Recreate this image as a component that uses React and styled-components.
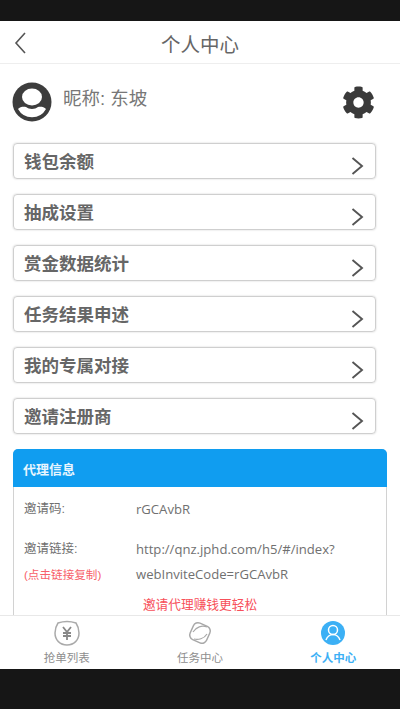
import React from "react";
import styled, { createGlobalStyle } from "styled-components";
import { FaCog } from "react-icons/fa";

const GlobalStyle = createGlobalStyle`
  html, body {
    margin: 0;
    padding: 0;
    background: #161616;
    font-family: "Liberation Sans", "Noto Sans CJK SC", sans-serif;
  }
  * { box-sizing: border-box; }
`;

const menuItems = [
  "钱包余额",
  "抽成设置",
  "赏金数据统计",
  "任务结果申述",
  "我的专属对接",
  "邀请注册商",
];

const Page = styled.div`
  width: 400px;
  height: 709px;
  display: flex;
  flex-direction: column;
  background: #161616;
  overflow: hidden;
`;

const BlackBar = styled.div`
  flex: 0 0 ${(p) => p.$h}px;
`;

const Screen = styled.div`
  flex: 1;
  min-height: 0;
  display: flex;
  flex-direction: column;
  background: #fff;
`;

const Header = styled.header`
  flex: 0 0 43px;
  display: flex;
  align-items: center;
  justify-content: center;
  position: relative;
  padding-top: 2px;
  border-bottom: 1px solid #eee;
  font-size: 19.5px;
  color: #666;
`;

const BackIcon = styled.svg`
  position: absolute;
  left: 14px;
  top: 10px;
`;

const Body = styled.div`
  flex: 1;
  min-height: 0;
  overflow: hidden;
`;

const Profile = styled.div`
  height: 79px;
  padding: 0 25px 3px 12px;
  display: flex;
  align-items: center;
`;

const Nick = styled.span`
  margin: -10px 0 0 11px;
  font-size: 18.5px;
  color: #777;
  flex: 1;
`;

const Gear = styled(FaCog)`
  width: 33px;
  height: 33px;
  color: #3a3a3a;
`;

const Menu = styled.div`
  display: flex;
  flex-direction: column;
  gap: 15px;
  padding: 0 24px 0 13px;
`;

const MenuRow = styled.div`
  height: 36px;
  display: flex;
  align-items: center;
  justify-content: space-between;
  padding: 0 11px 2px 10px;
  border: 1px solid #cfcfcf;
  border-radius: 4px;
  box-shadow: 0 0 2px #ccc;
  font-size: 17.5px;
  font-weight: 700;
  color: #666;
`;

const Chevron = styled.svg`
  margin-top: 11px;
`;

const Panel = styled.section`
  margin: 15px 13px 0;
  border: 1px solid #d2d2d2;
  border-radius: 5px 5px 0 0;
  height: 200px;
`;

const PanelTitle = styled.div`
  height: 38px;
  margin: -1px -1px 0;
  padding-left: 10px;
  display: flex;
  align-items: center;
  border-radius: 5px 5px 0 0;
  background: #109df0;
  color: #e8f5fe;
  font-size: 13px;
  font-weight: 700;
`;

const InfoRow = styled.div`
  display: grid;
  grid-template-columns: 112px 1fr;
  padding-left: 10px;
  margin-top: ${(p) => p.$top}px;
  font-size: 12.5px;
  line-height: 25px;
  color: #707070;
`;

const Value = styled.div`
  font-family: "Open Sans", "Noto Sans CJK SC", sans-serif;
  font-size: 13.1px;
`;

const Hint = styled.div`
  color: #f7606a;
  font-size: 11.6px;
`;

const Promo = styled.div`
  margin-top: 7px;
  text-align: center;
  font-size: 12.7px;
  color: #f7505a;
`;

const TabBar = styled.nav`
  flex: 0 0 54px;
  display: grid;
  grid-template-columns: repeat(3, 1fr);
  border-top: 1px solid #e8e8e8;
  background: #fff;
`;

const Tab = styled.div`
  display: flex;
  flex-direction: column;
  align-items: center;
  padding-top: 4px;
  gap: 3px;
  font-size: 11.5px;
  color: ${(p) => (p.$active ? "#3cb0f5" : "#8e8e8e")};
  font-weight: ${(p) => (p.$active ? 700 : 400)};
`;

const ChevronRight = () => (
  <Chevron width="14" height="20" viewBox="0 0 14 20" fill="none" stroke="#555" strokeWidth="1.9">
    <path d="M2.5 2l9.5 8-9.5 8" />
  </Chevron>
);

const Avatar = () => (
  <svg width="40" height="40" viewBox="0 0 40 40">
    <circle cx="20" cy="20" r="19.5" fill="#3d3d3d" />
    <ellipse cx="20" cy="15" rx="10" ry="8.5" fill="#fff" />
    <path
      d="M6 27c2-2.500 6-2.500 8-2 3 2.500 9 2.500 12 0 2-.5 6-.5 8 2a16 16 0 0 1-28 0z"
      fill="#fff"
    />
  </svg>
);

const OrderIcon = () => (
  <svg width="28" height="26" viewBox="0 0 28 26" fill="none">
    <path
      d="M5 3c6-2 12-2 18 0 2 3 3 7 3 10 0 7-5 12-12 12S2 20 2 13c0-3 1-7 3-10z"
      stroke="#aaa"
      strokeWidth="1.5"
    />
    <path d="M10 7l4 5 4-5M14 12v8M10 13h8M10 16h8" stroke="#888" strokeWidth="1.8" />
  </svg>
);

const TaskIcon = () => (
  <svg width="28" height="26" viewBox="0 0 28 26" fill="none" stroke="#a8a8a8" strokeWidth="1.5">
    <rect x="5" y="4" width="18" height="18" rx="5" transform="rotate(24 14 13)" />
    <path d="M7 12c3-5 9-7 14-5M8 19c4 1 10 0 13-5" strokeWidth="1.2" />
  </svg>
);

const UserTabIcon = () => (
  <svg width="26" height="26" viewBox="0 0 26 26" fill="none">
    <circle cx="13" cy="13" r="12" fill="#3cb0f5" />
    <circle cx="13" cy="10" r="4.500" stroke="#fff" strokeWidth="1.5" />
    <path d="M6 20c1-3 4-5.500 7-5.500s6 2.500 7 5.500" stroke="#fff" strokeWidth="1.5" />
  </svg>
);

const App = () => {
  return (
    <Page>
      <GlobalStyle />
      <BlackBar $h={21} />
      <Screen>
        <Header>
          <BackIcon width="14" height="24" viewBox="0 0 14 24" fill="none" stroke="#555" strokeWidth="1.6">
            <path d="M11 2L2 12l9 10" />
          </BackIcon>
          个人中心
        </Header>
        <Body>
          <Profile>
            <Avatar />
            <Nick>昵称: 东坡</Nick>
            <Gear />
          </Profile>
          <Menu>
            {menuItems.map((item) => (
              <MenuRow key={item}>
                {item}
                <ChevronRight />
              </MenuRow>
            ))}
          </Menu>
          <Panel>
            <PanelTitle>代理信息</PanelTitle>
            <InfoRow $top={10}>
              <div>邀请码:</div>
              <Value>rGCAvbR</Value>
            </InfoRow>
            <InfoRow $top={15}>
              <div>
                邀请链接:
                <Hint>(点击链接复制)</Hint>
              </div>
              <Value>
                http://qnz.jphd.com/h5/#/index?
                <br />
                webInviteCode=rGCAvbR
              </Value>
            </InfoRow>
            <Promo>邀请代理赚钱更轻松</Promo>
          </Panel>
        </Body>
        <TabBar>
          <Tab>
            <OrderIcon />
            抢单列表
          </Tab>
          <Tab>
            <TaskIcon />
            任务中心
          </Tab>
          <Tab $active>
            <UserTabIcon />
            个人中心
          </Tab>
        </TabBar>
      </Screen>
      <BlackBar $h={40} />
    </Page>
  );
};

export default App;
